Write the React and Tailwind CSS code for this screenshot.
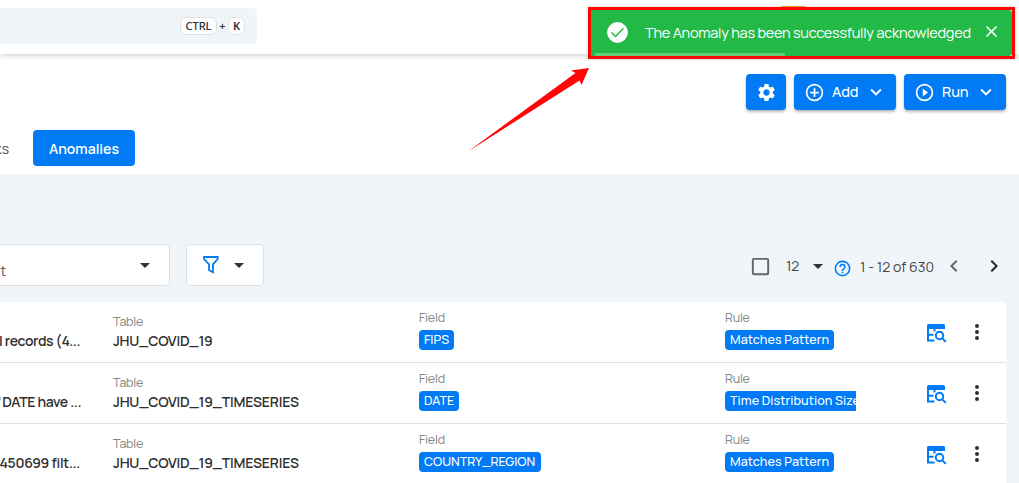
import { MdSettings } from "react-icons/md";

const CIRCLE =
  "M12 20c-4.41 0-8-3.59-8-8s3.59-8 8-8 8 3.59 8 8-3.59 8-8 8m0-18A10 10 0 0 0 2 12a10 10 0 0 0 10 10 10 10 0 0 0 10-10A10 10 0 0 0 12 2";
const PATHS = {
  plus: CIRCLE + "m1 5h-2v4H7v2h4v4h2v-4h4v-2h-4V7Z",
  play: CIRCLE + "M10 16.5l6-4.5-6-4.5v9Z",
  help:
    "M11 18h2v-2h-2v2m1-16A10 10 0 0 0 2 12a10 10 0 0 0 10 10 10 10 0 0 0 10-10A10 10 0 0 0 12 2m0 18c-4.41 0-8-3.59-8-8s3.59-8 8-8 8 3.59 8 8-3.59 8-8 8m0-14a4 4 0 0 0-4 4h2a2 2 0 0 1 2-2 2 2 0 0 1 2 2c0 2-3 1.75-3 5h2c0-2.25 3-2.5 3-5a4 4 0 0 0-4-4Z",
  down: "M7.41 8.58 12 13.17l4.59-4.59L18 10l-6 6-6-6 1.41-1.42Z",
  left: "M15.41 16.58 10.83 12l4.58-4.59L14 6l-6 6 6 6 1.41-1.42Z",
  right: "M8.59 16.58 13.17 12 8.59 7.41 10 6l6 6-6 6-1.41-1.42Z",
  caret: "M7 10l5 5 5-5H7Z",
  close:
    "M19 6.41 17.59 5 12 10.59 6.41 5 5 6.41 10.59 12 5 17.59 6.41 19 12 13.41 17.59 19 19 17.59 13.41 12 19 6.41Z",
  box: "M19 3H5c-1.11 0-2 .89-2 2v14a2 2 0 0 0 2 2h14a2 2 0 0 0 2-2V5a2 2 0 0 0-2-2m0 2v14H5V5h14Z",
  dots:
    "M12 16a2 2 0 1 1 0 4 2 2 0 0 1 0-4m0-6a2 2 0 1 1 0 4 2 2 0 0 1 0-4m0-6a2 2 0 1 1 0 4 2 2 0 0 1 0-4Z",
};

function Icon({ name, className }) {
  return (
    <svg viewBox="0 0 24 24" fill="currentColor" className={"shrink-0 " + className}>
      <path d={PATHS[name]} />
    </svg>
  );
}

function TableSearch() {
  return (
    <svg width="20" height="19" viewBox="0 0 20 19" fill="none" stroke="#007bf5" strokeWidth="2">
      <path d="M0 1.500a1.5 1.5 0 0 1 1.5-1.5h15A1.5 1.5 0 0 1 18 1.500v3.500h-18Z" fill="#007bf5" stroke="none" />
      <path d="M1 4v12.500H7.500M1 10.700H6.500M7.500 5v2.500" />
      <circle cx="12.500" cy="11.500" r="3.700" />
      <path d="M15 14.100l3.800 3.800" />
    </svg>
  );
}

const rows = [
  {
    title: "null records (4...", titleCls: "tracking-[-0.4px]",
    table: "JHU_COVID_19", tableCls: "tracking-[-0.22px]",
    field: "FIPS", fieldCls: "w-[35px]",
    rule: "Matches Pattern", ruleCls: "w-[109px] rounded-[4px]",
  },
  {
    title: "of DATE have ...", titleCls: "tracking-[-0.4px] -mr-[1px]",
    table: "JHU_COVID_19_TIMESERIES", tableCls: "tracking-[-0.2px]",
    field: "DATE", fieldCls: "w-[40px]",
    rule: "Time Distribution Size", ruleCls: "w-[131px] rounded-l-[4px]",
  },
  {
    title: "2450699 filt...", titleCls: "tracking-[-0.32px]",
    table: "JHU_COVID_19_TIMESERIES", tableCls: "tracking-[-0.2px]",
    field: "COUNTRY_REGION", fieldCls: "w-[122px]",
    rule: "Matches Pattern", ruleCls: "w-[109px] rounded-[4px]",
  },
];

function Chip({ children, className }) {
  return (
    <div className={"mt-1 h-5 overflow-hidden whitespace-nowrap bg-[#007bf5] pl-[5px] text-[12.5px] font-medium leading-[20px] text-white " + className}>
      {children}
    </div>
  );
}

function Label({ children }) {
  return <div className="h-4 text-[12.5px] leading-4 tracking-[-0.2px] text-[#858585]">{children}</div>;
}

function Row({ r }) {
  return (
    <div className="flex h-[61px] w-[1006px] border-b border-[#e0e0e0] bg-white">
      <div className="flex w-[82px] shrink-0 justify-end overflow-hidden pr-[2px] pt-[30px]">
        <span className={"whitespace-nowrap text-[14px] font-semibold leading-[18px] text-[#303030] " + r.titleCls}>{r.title}</span>
      </div>
      <div className="ml-[31px] w-[306px] shrink-0 pt-3">
        <Label>Table</Label>
        <div className={"mt-[2px] whitespace-nowrap text-[14px] font-semibold leading-[18px] text-[#303030] " + r.tableCls}>{r.table}</div>
      </div>
      <div className="w-[306px] shrink-0 pt-2">
        <Label>Field</Label>
        <Chip className={"rounded-[4px] " + r.fieldCls}>{r.field}</Chip>
      </div>
      <div className="w-[202px] shrink-0 pt-2">
        <Label>Rule</Label>
        <Chip className={"tracking-[0.1px] " + r.ruleCls}>{r.rule}</Chip>
      </div>
      <div className="flex items-start gap-[18px] pt-[18px]">
        <div className="pt-[4px]"><TableSearch /></div>
        <Icon name="dots" className="h-6 w-6 text-[#303030]" />
      </div>
    </div>
  );
}

function Action({ icon, children }) {
  return (
    <button className="flex h-9 w-[102px] items-center rounded-[4px] bg-[#007bf5] pl-[10px] text-white shadow-[0_2px_3px_rgba(0,0,0,0.28)]">
      <Icon name={icon} className="h-[21px] w-[21px]" />
      <span className="ml-[7px] w-[27px] text-left text-[14.5px] font-medium leading-5 tracking-[-0.1px]">{children}</span>
      <Icon name="down" className="ml-[6px] h-[22px] w-[22px]" />
    </button>
  );
}

export default function App() {
  return (
    <div className="relative flex h-[483px] w-[1019px] flex-col overflow-hidden bg-white font-['Manrope','Inter',sans-serif]">
      <header className="z-10 h-[54px] shrink-0 bg-white pt-2 shadow-[0_1px_6px_rgba(0,0,0,0.22)]">
        <div className="flex h-9 w-[257px] items-center justify-end rounded-r-[5px] bg-[#f0f5fa] pr-[12px] text-[#303030]">
          <kbd className="flex h-[18px] w-[37px] items-center justify-center rounded-[6px] border border-[#e0e0e0] bg-white font-['Noto_Sans',sans-serif] text-[11px] font-medium">CTRL</kbd>
          <span className="w-[11px] text-center font-['Noto_Sans',sans-serif] text-[11px] font-semibold">+</span>
          <kbd className="flex h-[18px] w-[17px] items-center justify-center rounded-[6px] border border-[#e0e0e0] bg-white font-['Noto_Sans',sans-serif] text-[11px] font-semibold">K</kbd>
        </div>
      </header>

      <div className="flex h-[56px] shrink-0 items-end justify-end gap-2 pr-[13px]">
        <button className="flex h-9 w-10 items-center justify-center rounded-[4px] bg-[#007bf5] text-white shadow-[0_2px_3px_rgba(0,0,0,0.28)]">
          <MdSettings size={21} />
        </button>
        <Action icon="plus">Add</Action>
        <Action icon="play">Run</Action>
      </div>

      <nav className="flex h-[64px] shrink-0 items-start pt-5 text-[14px]">
        <div className="flex h-9 w-[9px] items-center justify-end overflow-hidden">
          <span className="text-[14px] text-[#555]">Checks</span>
        </div>
        <button className="ml-6 h-9 w-[102px] rounded-[4px] bg-[#007bf5] text-[14px] font-semibold tracking-[0px] text-white">Anomalies</button>
      </nav>

      <main className="grow bg-[#f0f5fa] pt-[70px]">
        <div className="flex h-[42px] items-center">
          <div className="flex h-[42px] w-[170px] items-center rounded-r-[4px] border border-l-0 border-[#e0e0e0] bg-white">
            <div className="flex w-[6px] justify-end overflow-hidden pt-[11px]">
              <span className="text-[14px] leading-5 text-[#555]">Relevant</span>
            </div>
            <Icon name="caret" className="ml-[127px] h-6 w-6 text-[#303030]" />
          </div>
          <div className="ml-4 flex h-[42px] w-[78px] items-center rounded-[4px] border border-[#e0e0e0] bg-white pl-4">
            <svg width="17" height="20" viewBox="0 0 17 20" fill="none" stroke="#007bf5" strokeWidth="1.800">
              <path d="M1 2h13.700v2L10 9.300V17.300L6 15V9.300L1 4Z" />
            </svg>
            <Icon name="caret" className="ml-[7px] h-6 w-6 text-[#303030]" />
          </div>
          <div className="ml-[487px] flex items-center">
            <Icon name="box" className="-ml-[2px] mt-[2px] h-[23px] w-[23px] text-[#666]" />
            <span className="ml-[14px] mt-[2px] w-[18px] text-[14px] leading-5 tracking-[-0.1px] text-[#444]">12</span>
            <Icon name="caret" className="ml-[2px] mt-[1px] h-6 w-6 text-[#303030]" />
            <Icon name="help" className="ml-[3px] mt-[6px] h-[19px] w-[19px] text-[#007bf5]" />
            <span className="ml-[8px] mt-[3px] w-[75px] whitespace-nowrap text-[14px] leading-5 tracking-[-0.02px] text-[#444]">1 - 12 of 630</span>
            <Icon name="left" className="ml-[7px] mt-[1px] h-6 w-6 text-[#666]" />
            <Icon name="right" className="ml-4 mt-[1px] h-6 w-6 text-[#222]" />
          </div>
        </div>
        <div className="mt-4">
          {rows.map((r, i) => <Row key={i} r={r} />)}
        </div>
      </main>

      <div className="absolute left-[778px] top-[6px] z-10 h-2 w-[30px] rounded-t-[5px] bg-[#f5a623]" />
      <div className="absolute left-[588px] top-[7px] z-20 flex h-[52px] w-[427px] border-[3px] border-[#ff0505] bg-[#d8d8d8] shadow-[0_0_3px_rgba(0,0,0,0.2)]">
        <div className="relative flex h-full w-[421px] items-center overflow-hidden rounded-r-[4px] bg-[#23b946] pl-4 text-white">
          <svg width="21" height="21" viewBox="0 0 21 21" fill="none" className="mb-[2px] shrink-0">
            <circle cx="10.500" cy="10.500" r="10.400" fill="#fff" />
            <path d="M4.500 10.500l4 4 8-8.200" stroke="#23b946" strokeWidth="1.500" />
          </svg>
          <span className="ml-[17px] w-[327px] shrink-0 whitespace-nowrap text-[14.5px] leading-5 tracking-[-0.25px]">The Anomaly has been successfully acknowledged</span>
          <Icon name="close" className="mb-1 ml-[10px] h-[19px] w-[19px]" />
          <div className="absolute bottom-0 left-1 h-[3px] w-[190px] bg-[#65ce7d]" />
        </div>
      </div>
      <svg className="absolute left-[460px] top-[60px] z-20" width="150" height="100" viewBox="0 0 150 100">
        <path d="M8 91.500L115.500 13 111 10.500 129 8 121.500 25 119.500 20.500Z" fill="#ff0505" />
      </svg>
    </div>
  );
}
